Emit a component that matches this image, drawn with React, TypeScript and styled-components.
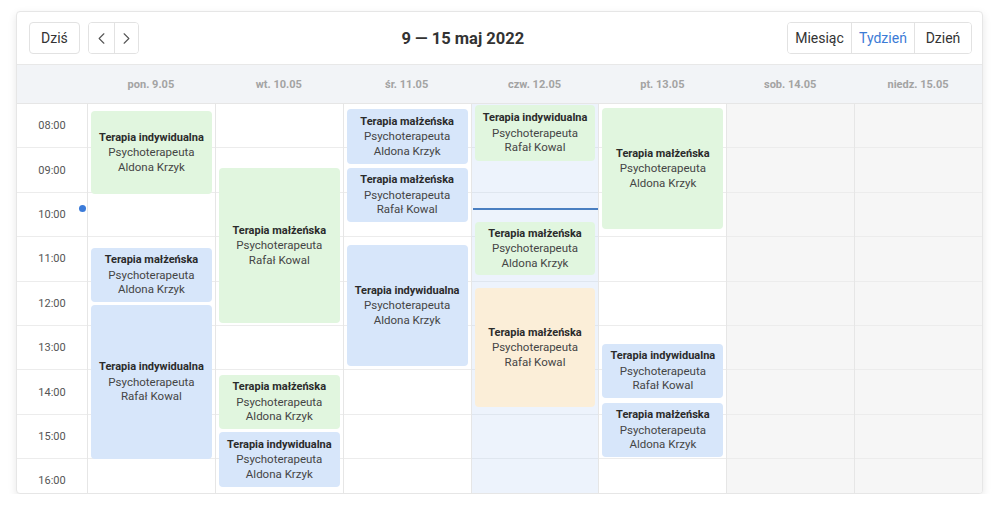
import React from "react";
import styled, { createGlobalStyle } from "styled-components";
import { ChevronLeft, ChevronRight } from "lucide-react";

const HOUR = 44.4;

const GlobalStyle = createGlobalStyle`
  body {
    margin: 0;
    background: #ffffff;
    font-family: Roboto, "Liberation Sans", sans-serif;
    color: #333333;
  }
`;

const Page = styled.div`
  padding: 11px 0 0 16px;
`;

const Card = styled.div`
  width: 967px;
  box-sizing: border-box;
  border: 1px solid #e6e6e6;
  border-radius: 4px;
  background: #ffffff;
  box-shadow: 0 3px 8px rgba(0, 0, 0, 0.1);
  overflow: hidden;
`;

const Toolbar = styled.div`
  height: 52px;
  display: flex;
  align-items: center;
  justify-content: space-between;
  padding: 0 10px 0 12px;
`;

const LeftGroup = styled.div`
  display: flex;
  gap: 8px;
`;

const Button = styled.button`
  height: 32px;
  min-width: 50px;
  padding: 0 11px;
  border: 1px solid #e2e2e2;
  border-radius: 4px;
  background: #ffffff;
  font-family: inherit;
  font-size: 14px;
  color: #333333;
  cursor: pointer;
`;

const ButtonGroup = styled.div`
  display: flex;
  border: 1px solid #e2e2e2;
  border-radius: 4px;
  overflow: hidden;
`;

const GroupButton = styled.button<{ $active?: boolean; $w: number }>`
  height: 30px;
  width: ${(p) => p.$w}px;
  padding: 0;
  border: none;
  border-left: 1px solid #e2e2e2;
  background: #ffffff;
  display: flex;
  align-items: center;
  justify-content: center;
  font-family: inherit;
  font-size: 14px;
  color: ${(p) => (p.$active ? "#3b7bd6" : "#333333")};
  cursor: pointer;

  &:first-child {
    border-left: none;
  }
`;

const Title = styled.h1`
  margin: 0;
  font-size: 16.5px;
  font-weight: 700;
  color: #333333;
`;

const HeadRow = styled.div`
  display: grid;
  grid-template-columns: 70px repeat(7, 1fr);
  height: 38px;
  background: #f2f4f7;
  border-top: 1px solid #e8e8e8;
  border-bottom: 1px solid #e6e6e6;
`;

const DayLabel = styled.div`
  display: flex;
  align-items: center;
  justify-content: center;
  font-size: 11px;
  font-weight: 700;
  color: #a3a3a3;
`;

const Body = styled.div`
  display: grid;
  grid-template-columns: 70px repeat(7, 1fr);
  height: 389px;
  overflow: hidden;
`;

const TimeColumn = styled.div`
  position: relative;
`;

const TimeSlot = styled.div`
  height: ${HOUR}px;
  box-sizing: border-box;
  border-bottom: 1px solid #ececec;
  display: flex;
  align-items: center;
  justify-content: center;
  font-size: 11px;
  color: #555555;
`;

const NowDot = styled.div`
  position: absolute;
  right: 1px;
  width: 7px;
  height: 7px;
  margin-top: -3.5px;
  border-radius: 50%;
  background: #3b7bd9;
`;

const DayColumn = styled.div<{ $kind: "normal" | "today" | "weekend" }>`
  position: relative;
  border-left: 1px solid #e6e6e6;
  background: ${(p) =>
    p.$kind === "today" ? "#edf3fc" : p.$kind === "weekend" ? "#f6f6f6" : "#ffffff"};
`;

const Slot = styled.div<{ $kind: "normal" | "today" | "weekend" }>`
  height: ${HOUR}px;
  box-sizing: border-box;
  border-bottom: 1px solid
    ${(p) => (p.$kind === "today" ? "#dfe6ef" : "#ececec")};
`;

const NowLine = styled.div`
  position: absolute;
  left: 1px;
  right: 0;
  height: 1.5px;
  background: #4a7fc1;
`;

const Event = styled.div<{ $color: "green" | "blue" | "orange" }>`
  position: absolute;
  left: 3px;
  right: 3px;
  border-radius: 4px;
  display: flex;
  flex-direction: column;
  align-items: center;
  justify-content: center;
  text-align: center;
  font-size: 11.5px;
  line-height: 14.5px;
  color: #454545;
  background: ${(p) =>
    p.$color === "green" ? "#e1f6df" : p.$color === "orange" ? "#fbeed8" : "#d7e6fa"};
`;

const EventTitle = styled.div`
  font-size: 11px;
  font-weight: 700;
  color: #2b2b2b;
`;

type Ev = {
  top: number;
  height: number;
  title: string;
  who: string;
  color: "green" | "blue" | "orange";
};

type Day = { label: string; kind: "normal" | "today" | "weekend"; events: Ev[] };

const IND = "Terapia indywidualna";
const MAL = "Terapia małżeńska";

const days: Day[] = [
  {
    label: "pon. 9.05",
    kind: "normal",
    events: [
      { top: 7, height: 83, title: IND, who: "Aldona Krzyk", color: "green" },
      { top: 144, height: 54, title: MAL, who: "Aldona Krzyk", color: "blue" },
      { top: 201, height: 154, title: IND, who: "Rafał Kowal", color: "blue" },
    ],
  },
  {
    label: "wt. 10.05",
    kind: "normal",
    events: [
      { top: 64, height: 155, title: MAL, who: "Rafał Kowal", color: "green" },
      { top: 271, height: 54, title: MAL, who: "Aldona Krzyk", color: "green" },
      { top: 328, height: 55, title: IND, who: "Aldona Krzyk", color: "blue" },
    ],
  },
  {
    label: "śr. 11.05",
    kind: "normal",
    events: [
      { top: 5, height: 55, title: MAL, who: "Aldona Krzyk", color: "blue" },
      { top: 64, height: 54, title: MAL, who: "Rafał Kowal", color: "blue" },
      { top: 141, height: 121, title: IND, who: "Aldona Krzyk", color: "blue" },
    ],
  },
  {
    label: "czw. 12.05",
    kind: "today",
    events: [
      { top: 1, height: 56, title: IND, who: "Rafał Kowal", color: "green" },
      { top: 118, height: 53, title: MAL, who: "Aldona Krzyk", color: "green" },
      { top: 184, height: 119, title: MAL, who: "Rafał Kowal", color: "orange" },
    ],
  },
  {
    label: "pt. 13.05",
    kind: "normal",
    events: [
      { top: 4, height: 121, title: MAL, who: "Aldona Krzyk", color: "green" },
      { top: 240, height: 54, title: IND, who: "Rafał Kowal", color: "blue" },
      { top: 299, height: 54, title: MAL, who: "Aldona Krzyk", color: "blue" },
    ],
  },
  { label: "sob. 14.05", kind: "weekend", events: [] },
  { label: "niedz. 15.05", kind: "weekend", events: [] },
];

const hours = ["08:00", "09:00", "10:00", "11:00", "12:00", "13:00", "14:00", "15:00", "16:00"];

const NOW = 104;

export default function App() {
  return (
    <Page>
      <GlobalStyle />
      <Card>
        <Toolbar>
          <LeftGroup>
            <Button>Dziś</Button>
            <ButtonGroup>
              <GroupButton $w={25}>
                <ChevronLeft size={19} strokeWidth={1.4} color="#555" />
              </GroupButton>
              <GroupButton $w={24}>
                <ChevronRight size={19} strokeWidth={1.4} color="#555" />
              </GroupButton>
            </ButtonGroup>
          </LeftGroup>
          <Title>9 — 15 maj 2022</Title>
          <ButtonGroup>
            <GroupButton $w={63}>Miesiąc</GroupButton>
            <GroupButton $w={63} $active>
              Tydzień
            </GroupButton>
            <GroupButton $w={57}>Dzień</GroupButton>
          </ButtonGroup>
        </Toolbar>

        <HeadRow>
          <div />
          {days.map((d) => (
            <DayLabel key={d.label}>{d.label}</DayLabel>
          ))}
        </HeadRow>

        <Body>
          <TimeColumn>
            {hours.map((h) => (
              <TimeSlot key={h}>{h}</TimeSlot>
            ))}
            <NowDot style={{ top: NOW }} />
          </TimeColumn>
          {days.map((d) => (
            <DayColumn key={d.label} $kind={d.kind}>
              {hours.map((h) => (
                <Slot key={h} $kind={d.kind} />
              ))}
              {d.kind === "today" && <NowLine style={{ top: NOW }} />}
              {d.events.map((e, i) => (
                <Event key={i} $color={e.color} style={{ top: e.top, height: e.height }}>
                  <EventTitle>{e.title}</EventTitle>
                  <div>Psychoterapeuta</div>
                  <div>{e.who}</div>
                </Event>
              ))}
            </DayColumn>
          ))}
        </Body>
      </Card>
    </Page>
  );
}
